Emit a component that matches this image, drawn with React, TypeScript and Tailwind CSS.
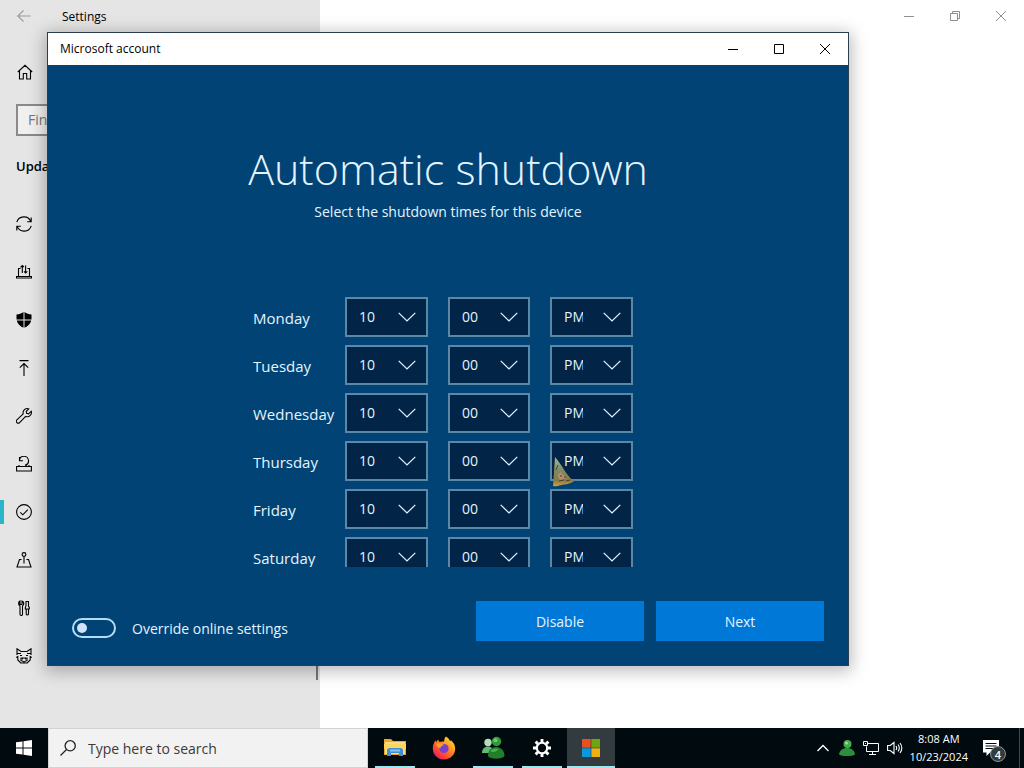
import { useState } from "react";
import type { ReactNode } from "react";

const days = ["Monday", "Tuesday", "Wednesday", "Thursday", "Friday", "Saturday"];

function Line({ children, label }: { children: ReactNode; label?: string }) {
  return (
    <svg
      viewBox="0 0 16 16"
      className="size-4 shrink-0"
      fill="none"
      stroke="currentColor"
      strokeWidth="1.1"
      role={label ? "img" : undefined}
      aria-label={label}
      aria-hidden={label ? undefined : true}
    >
      {children}
    </svg>
  );
}

const navItems: { name: string; icon: ReactNode }[] = [
  {
    name: "Update",
    icon: (
      <Line>
        <path d="M.8 6.2A7.400 7.400 0 0 1 14.800 5.600M15.200 9.800A7.400 7.400 0 0 1 1.200 10.400M15.200 1.500v4.300h-4M.8 14.500v-4.300h4" />
      </Line>
    ),
  },
  {
    name: "Delivery",
    icon: (
      <Line>
        <path d="M4.500 4.500h-2v8M11.500 4.500h2v8M.5 12.500h15v1.500h-15zM6.300 9V1.500M4.500 3.300l1.800-1.800 1.500 1.500M9.600 1.500V9M8 7.400l1.600 1.600 1.700-1.600" />
      </Line>
    ),
  },
  {
    name: "Protection",
    icon: (
      <svg viewBox="0 0 16 16" className="size-4 shrink-0" fill="currentColor" aria-hidden="true">
        <path d="M7.500 0C5.500 1.700 3 2.400.5 2.400V7.500h7zM8.500 0c2 1.700 4.500 2.400 7 2.400V7.500h-7zM.8 8.500c.6 3.200 3.200 5.700 6.700 7.300V8.500zM15.200 8.500c-.6 3.200-3.200 5.700-6.700 7.300V8.500z" />
      </svg>
    ),
  },
  {
    name: "Backup",
    icon: (
      <Line>
        <path d="M3.500.6h9M8 16V3.500M3.800 7.700 8 3.500l4.200 4.200" />
      </Line>
    ),
  },
  {
    name: "Troubleshoot",
    icon: (
      <Line>
        <path d="M12.800.9 10.200 3.500l.4 1.900 1.900.4 2.700-2.600a4.200 4.200 0 0 1-5.600 5.200l-6 6.200a1.900 1.900 0 0 1-2.700-2.700l6.300-6A4.200 4.200 0 0 1 12.800.9z" />
      </Line>
    ),
  },
  {
    name: "Recovery",
    icon: (
      <Line>
        <path d="M.6 10.500h14.800v4.500H.6zM3 10.500V9M13 10.500V9M3.500 4.500A4.500 4.500 0 1 1 9 9.200M3.500 1v3.700H7M10.500 10.500v-1" />
      </Line>
    ),
  },
  {
    name: "Activation",
    icon: (
      <Line>
        <circle cx="8" cy="8" r="7.400" />
        <path d="m4.300 8.300 2.500 2.500 5-5.200" />
      </Line>
    ),
  },
  {
    name: "Find device",
    icon: (
      <Line>
        <circle cx="8" cy="2.500" r="1.900" />
        <path d="M8 4.400v7M5.500 7.500H3.500L1 15h14l-2.500-7.500h-2" />
      </Line>
    ),
  },
  {
    name: "Developers",
    icon: (
      <Line>
        <path d="M4 1v3.500h2V1c1.500.7 2 2.400 1.500 3.800L6.500 6v8.200a1.200 1.200 0 0 1-2.500 0V6L3 5C2.400 3.300 2.800 1.700 4 1zM10 1.500h2.500V6l.8 1.500v1.500h-4V7.500L10 6zM10.200 9v5.200a1.200 1.200 0 0 0 2.300 0V9" />
      </Line>
    ),
  },
  {
    name: "Insider",
    icon: (
      <Line>
        <path d="M1 7V.8l4 2.700h6L15 .8V7M.3 9.500l1.500-1V12l3 3h6.400l3-3V8.500l1.500 1M1 5.500h4M15 5.500h-4M4 7.500h2M10 7.500h2M5 12.500V10h6v2.500L8 14zM6.500 10v1.500M9.500 10v1.500" />
      </Line>
    ),
  },
];

function WindowControls({ restored }: { restored?: boolean }) {
  const button = "flex h-8 w-[46px] items-center justify-center";
  return (
    <div className="flex">
      <button type="button" aria-label="Minimize" className={button}>
        <svg viewBox="0 0 10 10" className="size-[10px]" stroke="currentColor" aria-hidden="true">
          <path d="M0 5.500h10" />
        </svg>
      </button>
      <button type="button" aria-label={restored ? "Restore" : "Maximize"} className={button}>
        <svg viewBox="0 0 10 10" className="size-[10px]" stroke="currentColor" fill="none" aria-hidden="true">
          {restored ? <path d="M.5 2.500h7v7h-7zM2.500 2.500v-2h7v7h-2" /> : <path d="M.5.5h9v9h-9z" />}
        </svg>
      </button>
      <button type="button" aria-label="Close" className={button}>
        <svg viewBox="0 0 10 10" className="size-[10px]" stroke="currentColor" aria-hidden="true">
          <path d="m0 0 10 10M10 0 0 10" />
        </svg>
      </button>
    </div>
  );
}

function TimeSelect({ label, value, options }: { label: string; value: string; options: string[] }) {
  return (
    <div className="relative">
      <select
        aria-label={label}
        defaultValue={value}
        className="block h-10 w-full appearance-none border-2 border-[#5c88a8] bg-[#012447] pr-[48px] pl-3 text-sm text-[#e4f4ff]"
      >
        {options.map((o) => (
          <option key={o}>{o}</option>
        ))}
      </select>
      <svg
        viewBox="0 0 18 10"
        className="pointer-events-none absolute top-[15px] right-3 h-[10px] w-[18px]"
        fill="none"
        stroke="#e4f4ff"
        strokeWidth="1.300"
        aria-hidden="true"
      >
        <path d="m.7.9 8.300 8L17.300.9" />
      </svg>
    </div>
  );
}

function AccountDialog() {
  const [override, setOverride] = useState(false);
  return (
    <section
      aria-label="Microsoft account"
      className="absolute top-8 right-[175px] bottom-[62px] left-[47px] flex flex-col border border-[#2c3e4e] bg-[#014374] text-[#e4f4ff] shadow-[0_3px_16px_2px_rgba(0,0,0,0.28)]"
    >
      <header className="flex h-8 shrink-0 items-center justify-between bg-white pl-3 text-black">
        <span className="text-[12px]">Microsoft account</span>
        <WindowControls />
      </header>
      <div className="flex min-h-0 flex-1 flex-col px-6 pt-[74px] pb-6">
        <h1 className="text-center text-[43px] leading-[60px] font-light">Automatic shutdown</h1>
        <p className="text-center text-sm leading-[26px]">Select the shutdown times for this device</p>
        <div className="mx-auto mt-[72px] min-h-0 w-[390px] flex-1 overflow-hidden">
          <div className="grid gap-2">
            {days.map((day) => (
              <div key={day} className="grid grid-cols-[72px_83px_82px_83px] items-center gap-5">
                <span className="pt-[2px] text-[15px] whitespace-nowrap">{day}</span>
                <TimeSelect label={`${day} hour`} value="10" options={["10"]} />
                <TimeSelect label={`${day} minute`} value="00" options={["00"]} />
                <TimeSelect label={`${day} period`} value="PM" options={["PM"]} />
              </div>
            ))}
          </div>
        </div>
        <footer className="mt-[34px] flex shrink-0 items-end justify-between">
          <label className="flex h-[26px] items-center gap-4 text-sm">
            <input
              type="checkbox"
              role="switch"
              checked={override}
              onChange={(e) => setOverride(e.target.checked)}
              className="flex h-5 w-11 appearance-none items-center rounded-full border-2 border-[#b5dcf5] px-[3px] before:size-[10px] before:rounded-full before:bg-[#d3e3fb] checked:justify-end"
            />
            <span className="pt-[2px]">Override online settings</span>
          </label>
          <div className="flex gap-3">
            <button type="button" className="h-10 w-[168px] bg-[#0078d7] pt-[2px] text-sm">
              Disable
            </button>
            <button type="button" className="h-10 w-[168px] bg-[#0078d7] pt-[2px] text-sm">
              Next
            </button>
          </div>
        </footer>
      </div>
    </section>
  );
}

function TaskButton({ name, running, active, children }: { name: string; running?: boolean; active?: boolean; children: ReactNode }) {
  return (
    <button
      type="button"
      aria-label={name}
      className={`relative flex w-12 items-center justify-center ${active ? "bg-[#333b3e]" : ""}`}
    >
      {children}
      {running && (
        <span className={`absolute bottom-0 h-[2px] bg-[#a0e6ee] ${active ? "inset-x-0" : "inset-x-1"}`} />
      )}
    </button>
  );
}

function Taskbar() {
  return (
    <footer className="flex h-10 shrink-0 bg-[#010a0e] text-white">
      <button type="button" aria-label="Start" className="flex w-12 items-center justify-center">
        <svg viewBox="0 0 16 16" className="size-4" fill="white" aria-hidden="true">
          <path d="M0 2.300 6.500 1.400v6.100H0zM7.500 1.200 16 0v7.500H7.500zM0 8.500h6.500v6.100L0 13.700zM7.500 8.500H16V16l-8.500-1.200z" />
        </svg>
      </button>
      <label className="flex w-80 items-center gap-3 border border-[#d0d2d3] bg-[#f2f2f2] px-[11px] text-[#333]">
        <svg viewBox="0 0 16 16" className="size-4 shrink-0" fill="none" stroke="#222" strokeWidth="1.300" aria-hidden="true">
          <circle cx="10.200" cy="5.800" r="5.100" />
          <path d="M6.500 9.500.5 15.500" />
        </svg>
        <input
          aria-label="Search"
          placeholder="Type here to search"
          className="w-full min-w-0 bg-transparent pt-[2px] text-sm outline-none placeholder:text-[#3a3a3a]"
        />
      </label>
      <div className="ml-[3px] flex gap-px">
        <TaskButton name="File Explorer" running>
          <svg viewBox="0 0 22 18" className="h-[18px] w-[22px]" aria-hidden="true">
            <path d="M0 0h7l2 2h13v14H0z" fill="#e9a829" />
            <path d="M1 3h20v12H1z" fill="#fbdc7d" />
            <path d="M0 5h22v5H0z" fill="#fcd462" />
            <path d="M3 17v-6.500L5 9h12l2 1.500V17h-4v-3H7v3z" fill="#3f8fd4" />
            <path d="M6 10.500h10v2H6z" fill="#8cc3ee" />
          </svg>
        </TaskButton>
        <TaskButton name="Firefox">
          <svg viewBox="0 0 24 24" className="size-6" aria-hidden="true">
            <defs>
              <linearGradient id="fox" x1="1" y1="0" x2="0.2" y2="1">
                <stop offset="0" stopColor="#fff04a" />
                <stop offset=".4" stopColor="#ff9a1f" />
                <stop offset=".75" stopColor="#ff4632" />
                <stop offset="1" stopColor="#e3157a" />
              </linearGradient>
            </defs>
            <path d="M14 .5c2 1.200 3.300 2.800 4 4.800l1-1c2.700 2.500 4.200 5 4.200 8.300C23.200 19 18.300 23.500 12 23.500S.8 18.800.8 12.500C.8 9 2 6.500 3.500 4.200l.7 2L6 3.500 7.500 6c1.500-.6 3-.7 4.500-.3.200-2 .6-3.800 2-5.200z" fill="url(#fox)" />
            <circle cx="12" cy="12.500" r="4.600" fill="#7a3fd0" />
            <path d="M4 8c3-1.500 6-1 8 1.200-2.500.2-3.500 1.300-3.500 2.800-2-.2-3.500-1.500-4.500-4z" fill="#ffa526" />
          </svg>
        </TaskButton>
        <TaskButton name="Messenger" running>
          <svg viewBox="0 0 24 24" className="size-6" aria-hidden="true">
            <circle cx="7" cy="6.500" r="3.700" fill="#b6dcc0" />
            <path d="M1 17c0-4 2.500-6.500 6-6.500s5 2 5.500 6.500z" fill="#66b878" />
            <circle cx="15.500" cy="5.500" r="4.700" fill="#2f9a3a" />
            <circle cx="14.500" cy="4.300" r="2" fill="#72c472" />
            <path d="M7 20c0-5.500 3-9 8-9s8.500 3.500 8.500 9c-2 3.500-14.500 3.500-16.500 0z" fill="#217f2c" />
            <path d="M9.500 15.500c1.500-3 4.500-3.200 8-2.500-2 2.500-5 3.500-8 2.500z" fill="#54b058" />
          </svg>
        </TaskButton>
        <TaskButton name="Settings" running>
          <svg viewBox="0 0 20 20" className="size-[18px]" fill="none" stroke="white" aria-hidden="true">
            <circle cx="10" cy="10" r="5.800" strokeWidth="2.400" />
            <path
              d="M10 0v4M10 16v4M0 10h4M16 10h4M2.900 2.900l2.900 2.900M14.200 14.200l2.900 2.900M2.900 17.100l2.900-2.900M14.200 5.800l2.900-2.900"
              strokeWidth="3.200"
            />
          </svg>
        </TaskButton>
        <TaskButton name="Microsoft account" running active>
          <svg viewBox="0 0 18 18" className="size-[18px]" aria-hidden="true">
            <path d="M0 0h8.700v8.700H0z" fill="#e8501f" />
            <path d="M9.300 0H18v8.700H9.300z" fill="#6fa510" />
            <path d="M0 9.300h8.700V18H0z" fill="#0899e0" />
            <path d="M9.300 9.300H18V18H9.300z" fill="#f0b010" />
          </svg>
        </TaskButton>
      </div>
      <div className="ml-auto flex items-center">
        <div className="flex items-center gap-2">
          <svg viewBox="0 0 16 16" className="size-4" fill="none" stroke="white" strokeWidth="1.300" role="img" aria-label="Hidden icons">
            <path d="m2.500 11 5.500-5.500 5.500 5.500" />
          </svg>
          <svg viewBox="0 0 16 16" className="size-4" role="img" aria-label="Messenger status">
            <circle cx="8.500" cy="4" r="4" fill="#45ad50" />
            <path d="M0 14.500C.5 10.500 3.500 8 8 8s7.500 2.500 8 6.500c-3 2-13 2-16 0z" fill="#2c8f3b" />
            <circle cx="7.500" cy="3" r="1.500" fill="#9bdc9c" />
          </svg>
          <svg viewBox="0 0 16 16" className="size-4" fill="none" stroke="white" role="img" aria-label="Network">
            <path d="M5 3.500h10.500v8H3.500V6.500M.5 1.500h4v4h-4zM9.500 11.500v3M6 14.500h7M2.500 3v1" />
          </svg>
          <svg viewBox="0 0 16 16" className="size-4" fill="none" stroke="white" strokeWidth="1.100" role="img" aria-label="Volume">
            <path d="M.6 5.500h2.600L7 2.500v11L3.200 10.500H.6zM9 6c.8 1.200.8 2.800 0 4M11 4.500c1.500 2 1.500 5 0 7M13 3c2.200 3 2.200 7 0 10" />
          </svg>
        </div>
        <time className="ml-[7px] text-center text-[11px] leading-[18px]">
          8:08 AM
          <br />
          10/23/2024
        </time>
        <button type="button" aria-label="Notifications, 4 new" className="relative ml-[11px] flex size-6 items-center justify-center">
          <svg viewBox="0 0 16 16" className="size-4" aria-hidden="true">
            <path d="M0 0h16v12.500H7L3.500 16v-3.500H0z" fill="white" />
            <path d="M2.500 3.500h11M2.500 6h11M2.500 8.500h8" stroke="#010a0e" />
          </svg>
          <span className="absolute top-[10px] left-[11px] flex size-4 items-center justify-center rounded-full border border-[#8a9093] bg-[#343b3e] text-[11px] leading-none font-semibold">
            4
          </span>
        </button>
        <span className="ml-4 h-10 w-px bg-[#40474a]" />
        <span className="w-1" />
      </div>
    </footer>
  );
}

export default function App() {
  return (
    <div className="flex h-screen flex-col overflow-hidden bg-white font-['Open_Sans','Noto_Sans',sans-serif] text-black">
      <main className="relative flex min-h-0 flex-1">
        <aside className="relative w-80 shrink-0 bg-[#e5e5e5]">
          <div className="flex h-8 items-center gap-[30px] pl-4">
            <button type="button" aria-label="Back" className="text-[#9a9a9a]">
              <Line>
                <path d="M14.500 8h-13M7.500 2.500 1.800 8l5.700 5.500" />
              </Line>
            </button>
            <span className="pt-[2px] text-[12px]">Settings</span>
          </div>
          <div className="flex h-20 items-center pl-[17px]">
            <a href="#home" aria-label="Home">
              <Line>
                <path d="M.8 8 8 1.300 15.200 8M2.500 6.500V15h3.800V9.500h3.400V15h3.800V6.500" />
              </Line>
            </a>
          </div>
          <div className="-mt-2 pr-3 pl-4">
            <input
              aria-label="Search settings"
              placeholder="Find"
              className="block h-8 w-full border-2 border-[#8a8a8a] bg-[#f0f0f0] px-[10px] pb-[2px] text-sm placeholder:text-[#767676]"
            />
          </div>
          <h2 className="h-16 pl-4 text-[13px] leading-[60px] font-semibold">Update</h2>
          <nav>
            {navItems.map((item) => (
              <a
                key={item.name}
                href="#section"
                aria-label={item.name}
                className={`flex h-12 items-center pl-4 ${item.name === "Activation" ? "bg-[linear-gradient(#2bb5c8,#2bb5c8)] bg-[length:4px_24px] bg-left bg-no-repeat" : ""}`}
              >
                {item.icon}
              </a>
            ))}
          </nav>
          <span className="absolute top-[200px] right-[2px] bottom-12 w-[2px] bg-[#777]" />
        </aside>
        <div className="flex flex-1 items-start justify-end text-[#8f8f8f]">
          <WindowControls restored />
        </div>
        <AccountDialog />
        <svg viewBox="0 0 24 32" className="pointer-events-none absolute top-[456px] left-[552px] h-8 w-6" aria-hidden="true">
          <defs>
            <linearGradient id="pointer" x1="0" y1="0" x2="0" y2="1">
              <stop offset="0" stopColor="#9db79a" />
              <stop offset=".5" stopColor="#7d8a5c" />
              <stop offset=".8" stopColor="#8d7a4c" />
              <stop offset="1" stopColor="#c8a53c" />
            </linearGradient>
          </defs>
          <path d="M3 1 1 30c2 .6 5 .3 6-.5 4-1 11-1 15-4.500C15 21 11 10 3 1z" fill="url(#pointer)" />
          <path d="M6 18l3-2 2 3 3 1-2 3-4 1-2-3z" fill="#b08e70" />
          <path d="M8 20h2M12 21h2M7 25l5-1M4 14l2-5M14 25l4-1" stroke="#4a3c2a" />
        </svg>
      </main>
      <Taskbar />
    </div>
  );
}
